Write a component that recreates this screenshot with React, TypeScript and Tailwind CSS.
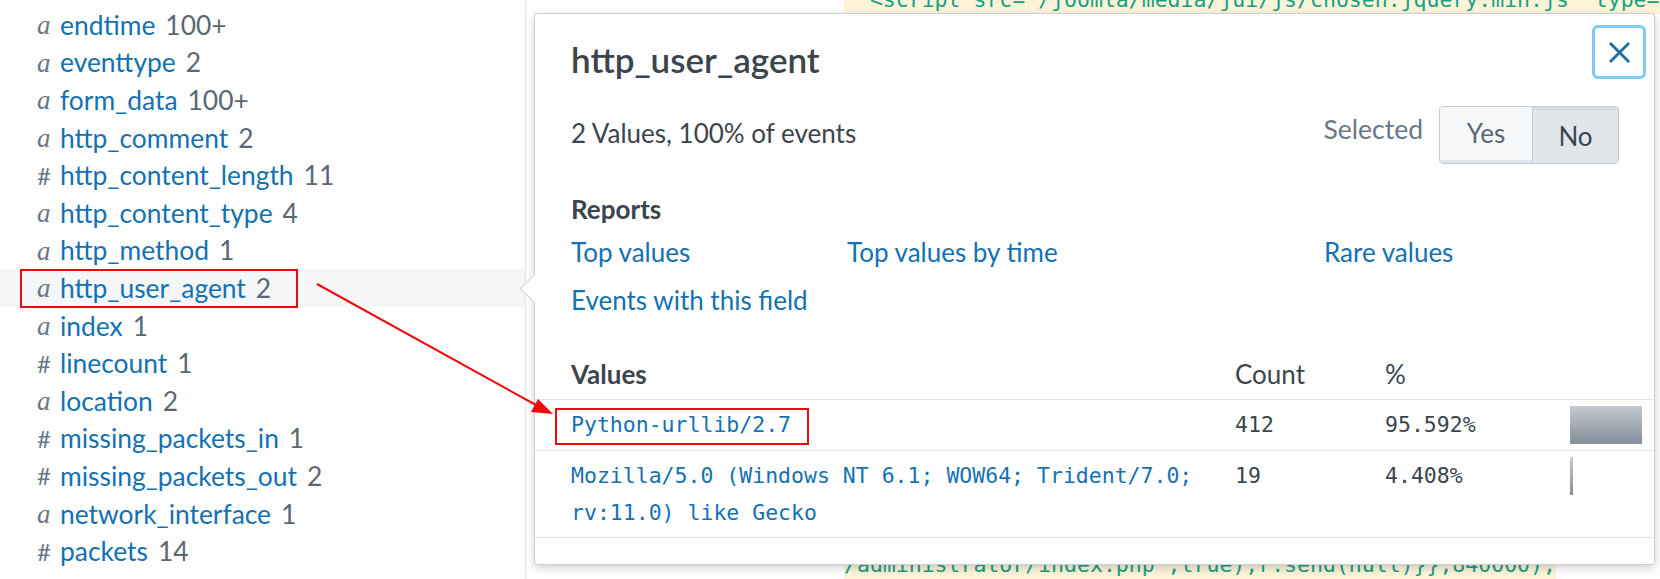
import React from "react";

type Field = { t: "a" | "#"; name: string; count: string; active?: boolean };

const fields: Field[] = [
  { t: "a", name: "endtime", count: "100+" },
  { t: "a", name: "eventtype", count: "2" },
  { t: "a", name: "form_data", count: "100+" },
  { t: "a", name: "http_comment", count: "2" },
  { t: "#", name: "http_content_length", count: "11" },
  { t: "a", name: "http_content_type", count: "4" },
  { t: "a", name: "http_method", count: "1" },
  { t: "a", name: "http_user_agent", count: "2", active: true },
  { t: "a", name: "index", count: "1" },
  { t: "#", name: "linecount", count: "1" },
  { t: "a", name: "location", count: "2" },
  { t: "#", name: "missing_packets_in", count: "1" },
  { t: "#", name: "missing_packets_out", count: "2" },
  { t: "a", name: "network_interface", count: "1" },
  { t: "#", name: "packets", count: "14" },
];

const values = [
  { lines: ["Python-urllib/2.7"], count: "412", pct: "95.592%", bar: 72, boxed: true },
  {
    lines: ["Mozilla/5.0 (Windows NT 6.1; WOW64; Trident/7.0;", "rv:11.0) like Gecko"],
    count: "19",
    pct: "4.408%",
    bar: 3,
  },
];

export default function App() {
  return (
    <div className="relative flex h-[579px] w-[1660px] overflow-hidden bg-white font-['Lato',sans-serif]">
      {/* Left field list */}
      <aside className="w-[526px] shrink-0 border-r border-[#e1e6eb] bg-white pt-[6px] text-[26.4px]">
        {fields.map((f) => (
          <div
            key={f.name}
            className={`relative flex h-[37.6px] items-center pl-[37px] leading-[30px] ${f.active ? "bg-[#f4f6f8]" : ""}`}
          >
            <span className="w-[23px] text-[#6b7785]">
              {f.t === "a" ? (
                <span className="font-['Liberation_Serif',serif] text-[27px] italic">a</span>
              ) : (
                <span className="text-[24px]">#</span>
              )}
            </span>
            <span className="text-[#1471b2]">{f.name}</span>
            <span className="ml-[10px] text-[#5c6773]">{f.count}</span>
            {f.active && (
              <div className="absolute left-[20px] top-0 h-[39px] w-[278px] border-2 border-[#ee0a0a]" />
            )}
          </div>
        ))}
      </aside>

      {/* Event area behind the popover */}
      <main className="flex flex-1 flex-col justify-between pl-[318px] font-['DejaVu_Sans_Mono',monospace] text-[21.5px] text-[#17a084]">
        <div className="h-[14px] overflow-hidden bg-[#fcf3d8]">
          <div className="-mt-[15px] whitespace-pre leading-[30px]">
            {'  <script src="/joomla/media/jui/js/chosen.jquery.min.js" type="text/javascript"></script>'}
          </div>
        </div>
        <div className="h-[24px] self-start overflow-hidden bg-[#fcf3d8]">
          <div className="-mt-[5px] whitespace-pre leading-[30px]">
            {'/administrator/index.php",true);r.send(null)}},840000);'}
          </div>
        </div>
      </main>

      {/* Popover */}
      <div className="absolute left-[534px] top-[13px] h-[552px] w-[1121px] rounded-[3px] border border-[#c9d0d8] bg-white shadow-[0_3px_8px_rgba(0,0,0,0.18)]">
        {/* caret */}
        <div className="absolute left-[-11px] top-[264px] h-[21px] w-[21px] rotate-45 border-b border-l border-[#c9d0d8] bg-white" />

        {/* close */}
        <button className="absolute right-[8px] top-[11px] flex h-[54px] w-[54px] items-center justify-center rounded-[6px] border-[3px] border-[#7ccaf7] bg-white">
          <svg width="21" height="21" viewBox="0 0 21 21">
            <path d="M2 2 L19 19 M19 2 L2 19" stroke="#1a6ea8" strokeWidth="2.8" strokeLinecap="square" />
          </svg>
        </button>

        <div className="pl-[36px] pr-[35px] pt-[25px]">
          <h2 className="text-[35px] font-semibold leading-[40px] text-[#3c444d]">http_user_agent</h2>

          <div className="mt-[27px] flex h-[58px] items-center">
            <div className="-mt-[4px] flex-1 text-[26px] text-[#3c444d]">2 Values, 100% of events</div>
            <div className="-mt-[10px] mr-[16px] text-[26.5px] text-[#6b7785]">Selected</div>
            <div className="flex h-[58px] overflow-hidden rounded-[4px] border border-[#c3cbd4] text-[26px]">
              <div className="flex w-[92px] items-center justify-center border-b-[3px] border-[#e1e6eb] bg-[#f7f8fa] text-[#5c6773]">
                Yes
              </div>
              <div className="flex w-[86px] items-center justify-center border-l border-t-[3px] border-[#c3cbd4] border-t-[#d5dbe2] bg-[#e1e6eb] text-[#3c444d]">
                No
              </div>
            </div>
          </div>

          <div className="mt-[30px] text-[26px] font-bold leading-[30px] text-[#3c444d]">Reports</div>
          <div className="mt-[13px] flex text-[26px] leading-[30px] text-[#1471b2]">
            <span className="w-[276px]">Top values</span>
            <span className="w-[477px]">Top values by time</span>
            <span>Rare values</span>
          </div>
          <div className="mt-[18px] text-[26px] leading-[30px] text-[#1471b2]">Events with this field</div>
        </div>

        {/* values table */}
        <div className="mt-[44px] flex h-[40px] items-start text-[26px] leading-[30px] text-[#3c444d]">
          <div className="w-[700px] pl-[36px] font-bold">Values</div>
          <div className="w-[150px]">Count</div>
          <div className="w-[185px]">%</div>
        </div>
        <div className="border-t border-[#e1e6eb]">
          {values.map((v) => (
            <div
              key={v.count}
              className="flex border-b border-[#e1e6eb] py-[6px] font-['DejaVu_Sans_Mono',monospace] text-[21.5px] leading-[37px]"
            >
              <div className="relative w-[700px] pl-[36px] text-[#1471b2]">
                {v.lines.map((l) => (
                  <div key={l} className="whitespace-pre">
                    {l}
                  </div>
                ))}
                {v.boxed && (
                  <div className="absolute left-[20px] top-[2px] h-[37px] w-[254px] border-2 border-[#ee0a0a]" />
                )}
              </div>
              <div className="w-[150px] text-[#3c444d]">{v.count}</div>
              <div className="w-[185px] text-[#3c444d]">{v.pct}</div>
              <div className="w-[72px]">
                <div
                  className="h-[38px] bg-linear-to-b from-[#c5cad2] to-[#858e9a]"
                  style={{ width: `${v.bar}px` }}
                />
              </div>
            </div>
          ))}
        </div>
      </div>

      {/* annotation arrow */}
      <svg className="pointer-events-none absolute left-0 top-0" width="1660" height="579">
        <line x1="317" y1="284" x2="536" y2="405" stroke="#ee0a0a" strokeWidth="2" />
        <polygon points="553,414 531,412 538,399" fill="#ee0a0a" />
      </svg>
    </div>
  );
}
